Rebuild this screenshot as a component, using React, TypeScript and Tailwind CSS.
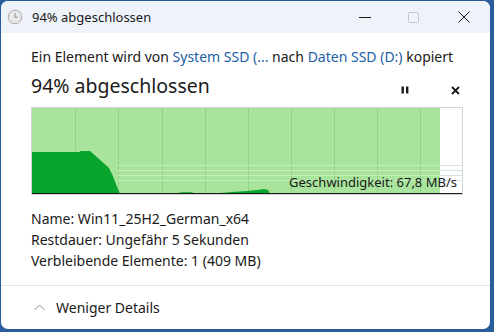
import React from "react";

const font = { fontFamily: '"Segoe UI", "Noto Sans", "Liberation Sans", sans-serif' };

// 📌 Kurve der Übertragungsrate (dunkelgrün)
const speedArea = "0,44 47,44 49,43 58,43 66,50 77,60 80,66 88,86 0,86";
const smallBumps = [
  "122,86 126,85 145,85 150,84.3 160,84.3 163,86",
  "184,86 188,85 200,84 215,83 225,82 232,81 236,82 238,86",
  "338,86 342,85 355,85 360,86",
  "385,86 390,85 402,85 407,86",
];

const SpeedChart: React.FC = () => {
  const gridX = [43, 86, 130, 173, 216, 259, 302, 345, 388];
  const gridY = [57, 62, 67, 72];
  return (
    <div className="relative mt-[7px] h-[88px] w-[432px] border border-[#d4d4d4] bg-white">
      <svg width="430" height="86" className="block">
        <rect x="0" y="0" width="408" height="86" fill="#a8e49c" />
        {gridX.map((x) => (
          <line key={`v${x}`} x1={x + 0.5} x2={x + 0.5} y1="0" y2="86" stroke="#92d187" strokeWidth="1" />
        ))}
        {gridY.map((y) => (
          <line key={`h${y}`} x1="86" x2="408" y1={y + 0.5} y2={y + 0.5} stroke="#c4ebbc" strokeWidth="1" />
        ))}
        {gridY.map((y) => (
          <line key={`hw${y}`} x1="408" x2="430" y1={y + 0.5} y2={y + 0.5} stroke="#d3e2e4" strokeWidth="1" />
        ))}
        <polygon points={speedArea} fill="#08a52c" />
        {smallBumps.map((p) => (
          <polygon key={p} points={p} fill="#08a52c" />
        ))}
        <line x1="0" x2="430" y1="85.5" y2="85.5" stroke="#1a1a1a" strokeWidth="1" />
      </svg>
      <span className="absolute right-[5px] bottom-[3px] text-[13px] leading-[18px] text-[#1a1a1a]" style={font}>
        Geschwindigkeit: 67,8 MB/s
      </span>
    </div>
  );
};

const App: React.FC = () => {
  return (
    <div className="h-[332px] w-[494px] overflow-hidden bg-[#2a5d9c] pt-px pl-px" style={font}>
      <div className="flex h-[328px] w-[489px] flex-col overflow-hidden rounded-[7px] bg-white">
        {/* 📌 Titelleiste */}
        <div className="flex h-[32px] shrink-0 items-center bg-[#eef3f9]">
          <svg width="16" height="16" viewBox="0 0 16 16" className="ml-[6px]">
            <circle cx="8" cy="8" r="6.8" fill="#e9e9e9" stroke="#a9a9a9" strokeWidth="1" />
            <path d="M8 4.2 V8.2 H10.6" fill="none" stroke="#8a8a8a" strokeWidth="1" />
          </svg>
          <span className="ml-[9px] text-[13px] leading-[20px] text-[#1a1a1a]">94% abgeschlossen</span>
          <div className="ml-auto flex h-full">
            <div className="flex w-[49px] items-center justify-center">
              <svg width="12" height="12" viewBox="0 0 12 12">
                <line x1="0" x2="12" y1="6.5" y2="6.5" stroke="#1a1a1a" strokeWidth="1" />
              </svg>
            </div>
            <div className="flex w-[49px] items-center justify-center">
              <svg width="11" height="11" viewBox="0 0 11 11">
                <rect x="0.5" y="0.5" width="10" height="10" rx="1" fill="none" stroke="#c4c7cb" strokeWidth="1" />
              </svg>
            </div>
            <div className="flex w-[52px] items-center justify-center">
              <svg width="12" height="12" viewBox="0 0 12 12">
                <path d="M0.5 0.5 L11.5 11.5 M11.5 0.5 L0.5 11.5" stroke="#1a1a1a" strokeWidth="1" />
              </svg>
            </div>
          </div>
        </div>

        {/* 📌 Inhalt */}
        <div className="flex flex-col pl-[30px]">
          <p className="mt-[14px] text-[14px] leading-[20px] text-[#1a1a1a]">
            Ein Element wird von <span className="text-[#2160a6]">System SSD (...</span> nach{" "}
            <span className="text-[#2160a6]">Daten SSD (D:)</span> kopiert
          </p>
          <div className="mt-[5px] flex h-[28px] w-[432px] items-center">
            <span className="text-[19.5px] leading-[28px] text-[#1a1a1a]">94% abgeschlossen</span>
            <div className="ml-auto flex items-center pt-[8px]">
              <svg width="8" height="8" viewBox="0 0 8 8" className="mr-[42px]">
                <rect x="0.5" y="0.5" width="2.4" height="7" fill="#1a1a1a" />
                <rect x="5" y="0.5" width="2.4" height="7" fill="#1a1a1a" />
              </svg>
              <svg width="9" height="9" viewBox="0 0 9 9" className="mr-[3px]">
                <path d="M1 1 L8 8 M8 1 L1 8" stroke="#1a1a1a" strokeWidth="1.8" />
              </svg>
            </div>
          </div>

          <SpeedChart />

          <div className="mt-[13px] flex flex-col text-[14px] leading-[21px] text-[#1a1a1a]">
            <span>Name: Win11_25H2_German_x64</span>
            <span>Restdauer: Ungefähr 5 Sekunden</span>
            <span>Verbleibende Elemente: 1 (409 MB)</span>
          </div>
        </div>

        {/* 📌 Fußzeile */}
        <div className="mt-[14px] flex flex-1 items-center border-t border-[#e3e3e3] pl-[33px]">
          <svg width="11" height="7" viewBox="0 0 11 7">
            <path d="M0.5 6 L5.5 1 L10.5 6" fill="none" stroke="#8a8a8a" strokeWidth="1" />
          </svg>
          <span className="ml-[11px] text-[14px] leading-[20px] text-[#1a1a1a]">Weniger Details</span>
        </div>
      </div>
    </div>
  );
};

export default App;
